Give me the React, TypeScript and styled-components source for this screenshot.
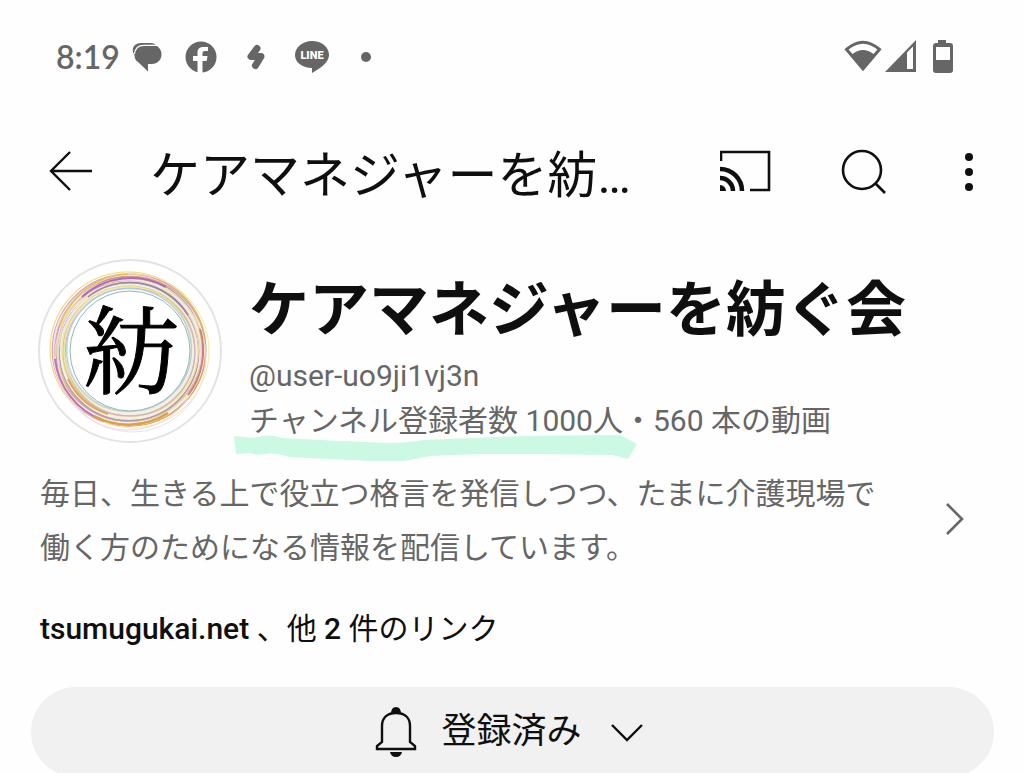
import React from "react";
import styled, { createGlobalStyle } from "styled-components";

const GlobalStyle = createGlobalStyle`
  *, *::before, *::after { box-sizing: border-box; }
  body {
    margin: 0;
    background: #fefefe;
    color: #0f0f0f;
    font-family: Roboto, "Noto Sans CJK JP", sans-serif;
  }
  h1, h2, p { margin: 0; font-weight: 400; }
  button { margin: 0; padding: 0; border: 0; background: none; color: inherit; font: inherit; cursor: pointer; }
  svg { display: block; flex: none; }
`;

const Page = styled.div`
  width: 100%;
  height: 100vh;
  overflow: hidden auto;
  scrollbar-width: none;
`;

const StatusBar = styled.div`
  display: flex;
  align-items: center;
  justify-content: space-between;
  height: 114px;
  padding: 0 70px 0 56px;
  color: #666;
`;

const StatusGroup = styled.div`
  display: flex;
  align-items: center;
  gap: 23px;
`;

const Clock = styled.time`
  width: 53px;
  font: 600 32px/40px Lato, sans-serif;
  white-space: nowrap;
`;

const AppBar = styled.header`
  display: flex;
  align-items: center;
  height: 116px;
  padding: 0 40px 0 48px;
`;

const IconButton = styled.button`
  display: flex;
  flex: none;
`;

const BarTitle = styled.h2`
  flex: 1;
  min-width: 0;
  margin-left: 56px;
  padding-top: 8px;
  font-size: 50px;
  line-height: 72px;
  white-space: nowrap;
  overflow: hidden;
`;

const Actions = styled.div`
  display: flex;
  align-items: center;
  gap: 67px;
`;

const Profile = styled.section`
  display: flex;
  gap: 27px;
  padding: 29px 38px 0;
`;

const ProfileText = styled.div`
  padding-top: 9px;
  white-space: nowrap;
`;

const ChannelName = styled.h1`
  font-size: 60px;
  font-weight: 700;
  line-height: 85px;
`;

const Meta = styled.p`
  color: #666;
  font-size: 30px;
  line-height: 45px;
`;

const Marked = styled.span`
  position: relative;
  z-index: 0;
`;

const Marker = styled.svg`
  position: absolute;
  z-index: -1;
  left: -15px;
  top: 32px;
`;

const Description = styled.button`
  display: flex;
  align-items: center;
  justify-content: space-between;
  width: 100%;
  margin-top: 22px;
  padding: 0 60px 0 40px;
  color: #666;
  text-align: left;
`;

const DescriptionText = styled.span`
  max-width: 860px;
  padding-top: 2px;
  font-size: 30px;
  line-height: 54px;
`;

const Links = styled.p`
  margin-top: 30px;
  padding: 0 40px;
  font-size: 30px;
  line-height: 48px;

  a { color: inherit; text-decoration: none; font-weight: 500; }
  b { font-weight: 500; }
`;

const Subscribed = styled.button`
  display: flex;
  align-items: center;
  justify-content: center;
  width: calc(100% - 61px);
  height: 90px;
  margin: 34px 30px 0 31px;
  padding-right: 7px;
  border-radius: 45px;
  background: #f1f1f1;
  font-size: 35px;
`;

const ButtonLabel = styled.span`
  margin: 0 29px 0 24px;
  line-height: 50px;
`;

const ringColors = [
  "#ecd76c", "#d08fcb", "#e3aa4c", "#ece9ee", "#b98cc4", "#e6dd7c", "#d9a9a0",
  "#a596b8", "#f0e680", "#f6f1e4", "#e5c070", "#c9b0cf", "#ece58c", "#a9cfe0",
];

const Avatar = () => (
  <svg width="184" height="184" viewBox="0 0 184 184" role="img" aria-label="紡">
    <circle cx="92" cy="92" r="91" fill="#fff" stroke="#e3e3e3" strokeWidth="2" />
    <g fill="none">
      <circle cx="91" cy="91" r="69" stroke="#f5eee6" strokeWidth="16" />
      {ringColors.map((color, i) => (
        <ellipse
          key={color}
          cx={90 + (i % 3)}
          cy={90 + (i % 4)}
          rx={78 - i * 1.2}
          ry={77 - i * 1.2}
          stroke={color}
          strokeWidth="1.2"
          opacity="0.9"
        />
      ))}
      <ellipse cx="95" cy="92" rx="76" ry="77" stroke="#f1ea9c" />
      <ellipse cx="94" cy="98" rx="74" ry="75" stroke="#dde6f6" />
      <ellipse cx="90" cy="97" rx="73" ry="74" stroke="#f3d5ee" />
      <path d="M44 38A73 73 0 0 1 128 28" stroke="#b468bd" strokeWidth="2" />
      <path d="M50 38A68 68 0 0 1 150 56" stroke="#8f87a0" strokeWidth="1.5" />
      <path d="M17 100A75 75 0 0 0 66 162" stroke="#c86fae" strokeWidth="2" />
      <path d="M56 157A73 73 0 0 0 130 154" stroke="#dfa044" strokeWidth="2.5" />
      <path d="M162 70A73 73 0 0 1 150 136" stroke="#cf8180" strokeWidth="2" />
      <path d="M22 66A75 75 0 0 1 90 15" stroke="#e8c552" strokeWidth="1.6" />
      <path d="M30 120A68 68 0 0 0 70 155" stroke="#e0a854" strokeWidth="2" />
      <circle cx="92" cy="92" r="60" fill="#fff" stroke="#8fb6bb" />
    </g>
    <text
      x="93"
      y="127"
      fontSize="96"
      fill="#000"
      stroke="#000"
      strokeWidth="1"
      textAnchor="middle"
      fontFamily='"Noto Serif CJK JP", "Noto Sans CJK JP", serif'
    >
      紡
    </text>
  </svg>
);

const App = () => (
  <>
    <GlobalStyle />
    <Page>
      <StatusBar>
        <StatusGroup>
          <Clock>8:19</Clock>
          <svg width="30" height="30" viewBox="0 0 30 30" fill="currentColor">
            <path d="M9 1h9c3 0 5.500 1 7 3 3 2 4.500 5 4.500 8.500C29.500 18 25 22 20 22h-4v7.500L6 20c-2.500-1.500-3.500-4-3.500-7C-1.500 7 2 1 9 1z" />
            <path d="M2.500 12C3 6.500 6.500 3.300 12 3.300h13" fill="none" stroke="#fefefe" strokeWidth="1.200" />
          </svg>
          <svg width="32" height="32" viewBox="0 0 32 32">
            <circle cx="16" cy="16" r="15.500" fill="currentColor" />
            <path d="M12.500 32V20H8v-5h4.500v-3.500C12.500 7.500 15 6 18.500 6H23v4h-3c-2 0-2.500 1-2.500 2.500V15h5l-.8 5h-4.200v12z" fill="#fefefe" />
          </svg>
          <svg width="32" height="32" viewBox="0 0 32 32" fill="none" stroke="currentColor" strokeWidth="7" strokeLinejoin="round" strokeLinecap="round">
            <path d="M17 7.500L11 15.500 21 15.500 15.500 24.500" />
          </svg>
          <svg width="34" height="34" viewBox="0 0 34 34" role="img" aria-label="LINE">
            <path d="M17 1c9.500 0 17 6 17 14 0 7-8 13-17 18v-5C7.500 28 0 22.500 0 15S7.500 1 17 1z" fill="currentColor" />
            <text x="17" y="19" fill="#fefefe" textAnchor="middle" fontFamily="Roboto, sans-serif" fontWeight="900" fontSize="11">LINE</text>
          </svg>
          <svg width="30" height="30" viewBox="0 0 30 30" fill="currentColor">
            <circle cx="14" cy="15" r="5" />
          </svg>
        </StatusGroup>
        <svg width="110" height="34" viewBox="0 0 110 34" fill="none" stroke="currentColor">
          <path d="M2.500 9.500Q19 -5 35.500 9.500L19 29z" strokeWidth="3" />
          <path d="M5 11Q19 3 33 11L19 29z" fill="currentColor" stroke="none" />
          <path d="M5.500 10.500Q19 -1 32.500 10.500L29.500 14Q19 6 8.500 14z" fill="#fefefe" stroke="none" />
          <path d="M41 32L72 0v32z" fill="currentColor" stroke="none" />
          <path d="M63 12.500l6-6v22.500h-6z" fill="#fefefe" stroke="none" />
          <path d="M90 3h4V0h8v3h4q3 0 3 3v24q0 3-3 3H92q-3 0-3-3V6q0-3 3-3z" fill="currentColor" stroke="none" />
          <path d="M92 7h14v13H92z" fill="#fefefe" stroke="none" />
        </svg>
      </StatusBar>

      <AppBar>
        <IconButton aria-label="戻る">
          <svg width="46" height="46" viewBox="0 0 46 46" fill="none" stroke="#0f0f0f" strokeWidth="2.400">
            <path d="M22 3L3 22l19 19M3 22h41" />
          </svg>
        </IconButton>
        <BarTitle>ケアマネジャーを紡…</BarTitle>
        <Actions>
          <IconButton aria-label="キャスト">
            <svg width="52" height="44" viewBox="0 0 52 44" fill="none" stroke="#0f0f0f">
              <path d="M1 11V2h48v38H30" strokeWidth="2.600" />
              <path d="M0 19a22 22 0 0 1 22 22M0 28a13 13 0 0 1 13 13" strokeWidth="4.500" />
              <path d="M0 35a6 6 0 0 1 6 6H0z" fill="#0f0f0f" stroke="none" />
            </svg>
          </IconButton>
          <IconButton aria-label="検索">
            <svg width="48" height="46" viewBox="0 0 48 46" fill="none" stroke="#0f0f0f" strokeWidth="2.600">
              <circle cx="23" cy="21" r="19" />
              <path d="M36 34l10 10" />
            </svg>
          </IconButton>
          <IconButton aria-label="その他">
            <svg width="30" height="44" viewBox="0 0 30 44" fill="#0f0f0f">
              <circle cx="15" cy="7" r="4" />
              <circle cx="15" cy="22" r="4" />
              <circle cx="15" cy="37" r="4" />
            </svg>
          </IconButton>
        </Actions>
      </AppBar>

      <Profile>
        <Avatar />
        <ProfileText>
          <ChannelName>ケアマネジャーを紡ぐ会</ChannelName>
          <Meta>@user-uo9ji1vj3n</Meta>
          <Meta>
            <Marked>
              チャンネル登録者数 1000人
              <Marker width="404" height="28" viewBox="0 0 404 28" fill="#cbf9e4">
                <path d="M0 1L20 3Q36-2 48 3L106 6 152 8Q172 8 190 5L290 1 386 0 403 9 394 24 378 20 306 19 246 19 196 21 170 26 136 26 56 22Q40 16 24 20L16 18 2 19z" />
              </Marker>
            </Marked>
            ・560 本の動画
          </Meta>
        </ProfileText>
      </Profile>

      <Description>
        <DescriptionText>
          毎日、生きる上で役立つ格言を発信しつつ、たまに介護現場で働く方のためになる情報を配信しています。
        </DescriptionText>
        <svg width="20" height="34" viewBox="0 0 20 34" fill="none" stroke="#666" strokeWidth="2.600">
          <path d="M3 1l15 15L3 31" />
        </svg>
      </Description>

      <Links>
        <a href="#links">tsumugukai.net</a> 、他 <b>2</b> 件のリンク
      </Links>

      <Subscribed>
        <svg width="42" height="52" viewBox="0 0 42 52" fill="none" stroke="#0f0f0f" strokeWidth="2.400">
          <path d="M7 20C7 11 13 7 21 7s14 4 14 13v16l5 4v3H2v-3l5-4z" />
          <path d="M16 8q0-7 5-7t5 7zM15 46h12q-1 5-6 5t-6-5z" fill="#0f0f0f" stroke="none" />
        </svg>
        <ButtonLabel>登録済み</ButtonLabel>
        <svg width="32" height="20" viewBox="0 0 32 20" fill="none" stroke="#0f0f0f" strokeWidth="2.400">
          <path d="M1 3l15 15L31 3" />
        </svg>
      </Subscribed>
    </Page>
  </>
);

export default App;
